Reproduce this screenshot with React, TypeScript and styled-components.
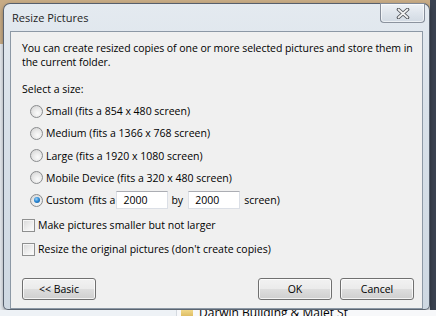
import React from 'react';
import styled, { createGlobalStyle } from 'styled-components';

const GlobalStyle = createGlobalStyle`
  html, body {
    margin: 0;
    padding: 0;
  }

  body {
    width: 436px;
    height: 316px;
    overflow: hidden;
    font-family: 'Open Sans', 'Noto Sans', sans-serif;
    font-size: 10.5px;
    color: #000;
  }
`;

const Desktop = styled.div`
  width: 436px;
  height: 316px;
  overflow: hidden;
  display: flex;
  flex-direction: column;
  background:
    linear-gradient(90deg, transparent 0 430px, #3a4250 430px),
    linear-gradient(180deg, #c7ab85 0 44px, #e6ebf0 44px);
`;

const Window = styled.div`
  flex: none;
  width: 425px;
  height: 305px;
  margin: 3px 6px 0 3px;
  display: flex;
  flex-direction: column;
  border: 1px solid rgba(45, 55, 70, 0.75);
  border-radius: 7px 7px 5px 5px;
  background: linear-gradient(180deg, #e4eaf0 0%, #d9e1e9 35%, #ced8e2 100%);
  box-shadow: 0 2px 4px rgba(0, 0, 0, 0.35);
`;

const TitleBar = styled.div`
  height: 28px;
  display: flex;
  align-items: flex-start;
  justify-content: space-between;
  padding-left: 8px;
`;

const Title = styled.span`
  margin-top: 6px;
  font-size: 11px;
  line-height: 15px;
  color: #1e1e1e;
`;

const CloseButton = styled.div`
  width: 43px;
  height: 18px;
  margin: -1px 4px 0 0;
  display: flex;
  align-items: center;
  justify-content: center;
  border: 1px solid rgba(60, 70, 85, 0.55);
  border-radius: 0 0 4px 4px;
  background: linear-gradient(180deg, #eef2f6 0%, #dfe5ec 50%, #d2dae3 100%);
  box-shadow: inset 0 0 0 1px rgba(255, 255, 255, 0.6);
`;

const Client = styled.div`
  height: 270px;
  margin: 0 6px;
  display: flex;
  flex-direction: column;
  padding: 9px 8px 8px 11px;
  border: 1px solid #8c98a5;
  background: #f0f0f0;
`;

const Intro = styled.p`
  margin: 0;
  line-height: 14px;
  white-space: nowrap;
  letter-spacing: -0.06px;
`;

const SectionLabel = styled.div`
  margin-top: 13px;
  line-height: 14px;
`;

const OptionList = styled.div`
  margin-top: 4px;
  padding-left: 8px;
  display: flex;
  flex-direction: column;
`;

const OptionRow = styled.label`
  height: 22.25px;
  display: flex;
  align-items: center;
  white-space: nowrap;
`;

const Radio = styled.span<{ checked?: boolean }>`
  flex: none;
  width: 11px;
  height: 11px;
  margin-right: 3px;
  display: flex;
  align-items: center;
  justify-content: center;
  border: 1px solid #8a8c8e;
  border-radius: 50%;
  background: radial-gradient(circle at 60% 65%, #fbfbfb 0%, #e9e9e9 45%, #cfcfcf 100%);

  &::after {
    content: '';
    display: ${(p) => (p.checked ? 'block' : 'none')};
    width: 6px;
    height: 6px;
    border-radius: 50%;
    background: radial-gradient(circle at 40% 35%, #9fd3f7 0%, #2c8ad6 45%, #0d4f91 100%);
  }
`;

const Word = styled.span<{ ml: number }>`
  margin-left: ${(p) => p.ml}px;
`;

const CheckList = styled.div`
  margin-top: 3px;
  display: flex;
  flex-direction: column;
  gap: 2px;
`;

const CheckRow = styled.label`
  height: 22px;
  display: flex;
  align-items: center;
  gap: 3px;
  white-space: nowrap;
`;

const Checkbox = styled.span`
  flex: none;
  width: 11px;
  height: 11px;
  border: 1px solid #8e8f8f;
  background: linear-gradient(135deg, #d8d8d8 0%, #f0f0f0 60%, #fdfdfd 100%);
  box-shadow: inset 0 0 0 1px #f6f6f6;
`;

const SizeInput = styled.input<{ ml: number }>`
  flex: none;
  box-sizing: border-box;
  width: 52px;
  height: 18px;
  margin: 0 0 0 ${(p) => p.ml}px;
  padding: 0 0 0 6px;
  font-family: inherit;
  font-size: 10.5px;
  border: 1px solid #dbdfe6;
  border-top-color: #abadb3;
  background: #fff;
  outline: none;
`;

const ButtonBar = styled.div`
  margin-top: auto;
  display: flex;
  align-items: center;
  gap: 8px;
`;

const Spacer = styled.div`
  flex: 1;
`;

const Button = styled.button`
  box-sizing: border-box;
  width: 74px;
  height: 22px;
  padding: 0;
  font-family: inherit;
  font-size: 10.5px;
  color: #000;
  border: 1px solid #707070;
  border-radius: 3px;
  background: linear-gradient(180deg, #f2f2f2 0%, #ebebeb 48%, #dddddd 52%, #cfcfcf 100%);
  box-shadow: inset 0 0 0 1px rgba(255, 255, 255, 0.75);
`;

const Explorer = styled.div`
  flex: none;
  height: 8px;
  display: flex;
  overflow: hidden;
`;

const NavPane = styled.div`
  width: 176px;
  border-right: 1px solid #d4d9df;
  background: #eef2f6;
`;

const FileRow = styled.div`
  flex: 1;
  display: flex;
  align-items: flex-start;
  gap: 6px;
  padding-left: 4px;
  background: #f7f8fa;
`;

const FolderIcon = styled.span`
  width: 12px;
  height: 8px;
  background: linear-gradient(180deg, #f1d98a, #d8b457);
`;

const FileName = styled.span`
  margin-top: -4px;
  font-size: 12px;
  line-height: 14px;
`;

const sizes = [
  'Small (fits a 854 x 480 screen)',
  'Medium (fits a 1366 x 768 screen)',
  'Large (fits a 1920 x 1080 screen)',
  'Mobile Device (fits a 320 x 480 screen)',
];

const CloseGlyph: React.FC = () => (
  <svg width="14" height="11" viewBox="0 0 14 11">
    <path d="M2.5 1.5 L11.5 9.5 M11.5 1.5 L2.5 9.5" stroke="#4f5358" strokeWidth="3.6" strokeLinecap="round" />
    <path d="M2.5 1.5 L11.5 9.5 M11.5 1.5 L2.5 9.5" stroke="#f2f2f2" strokeWidth="1.7" strokeLinecap="round" />
  </svg>
);

const App: React.FC = () => (
  <Desktop>
    <GlobalStyle />
    <Window>
      <TitleBar>
        <Title>Resize Pictures</Title>
        <CloseButton>
          <CloseGlyph />
        </CloseButton>
      </TitleBar>
      <Client>
        <Intro>
          You can create resized copies of one or more selected pictures and store them in
          <br />
          the current folder.
        </Intro>
        <SectionLabel>Select a size:</SectionLabel>
        <OptionList>
          {sizes.map((s) => (
            <OptionRow key={s}>
              <Radio />
              {s}
            </OptionRow>
          ))}
          <OptionRow>
            <Radio checked />
            Custom
            <Word ml={5}>(fits a</Word>
            <SizeInput ml={1} defaultValue="2000" />
            <Word ml={3}>by</Word>
            <SizeInput ml={5} defaultValue="2000" />
            <Word ml={4}>screen)</Word>
          </OptionRow>
        </OptionList>
        <CheckList>
          <CheckRow>
            <Checkbox />
            Make pictures smaller but not larger
          </CheckRow>
          <CheckRow>
            <Checkbox />
            Resize the original pictures (don't create copies)
          </CheckRow>
        </CheckList>
        <ButtonBar>
          <Button>&lt;&lt; Basic</Button>
          <Spacer />
          <Button>OK</Button>
          <Button>Cancel</Button>
        </ButtonBar>
      </Client>
    </Window>
    <Explorer>
      <NavPane />
      <FileRow>
        <FolderIcon />
        <FileName>Darwin Building &amp; Malet St</FileName>
      </FileRow>
    </Explorer>
  </Desktop>
);

export default App;
